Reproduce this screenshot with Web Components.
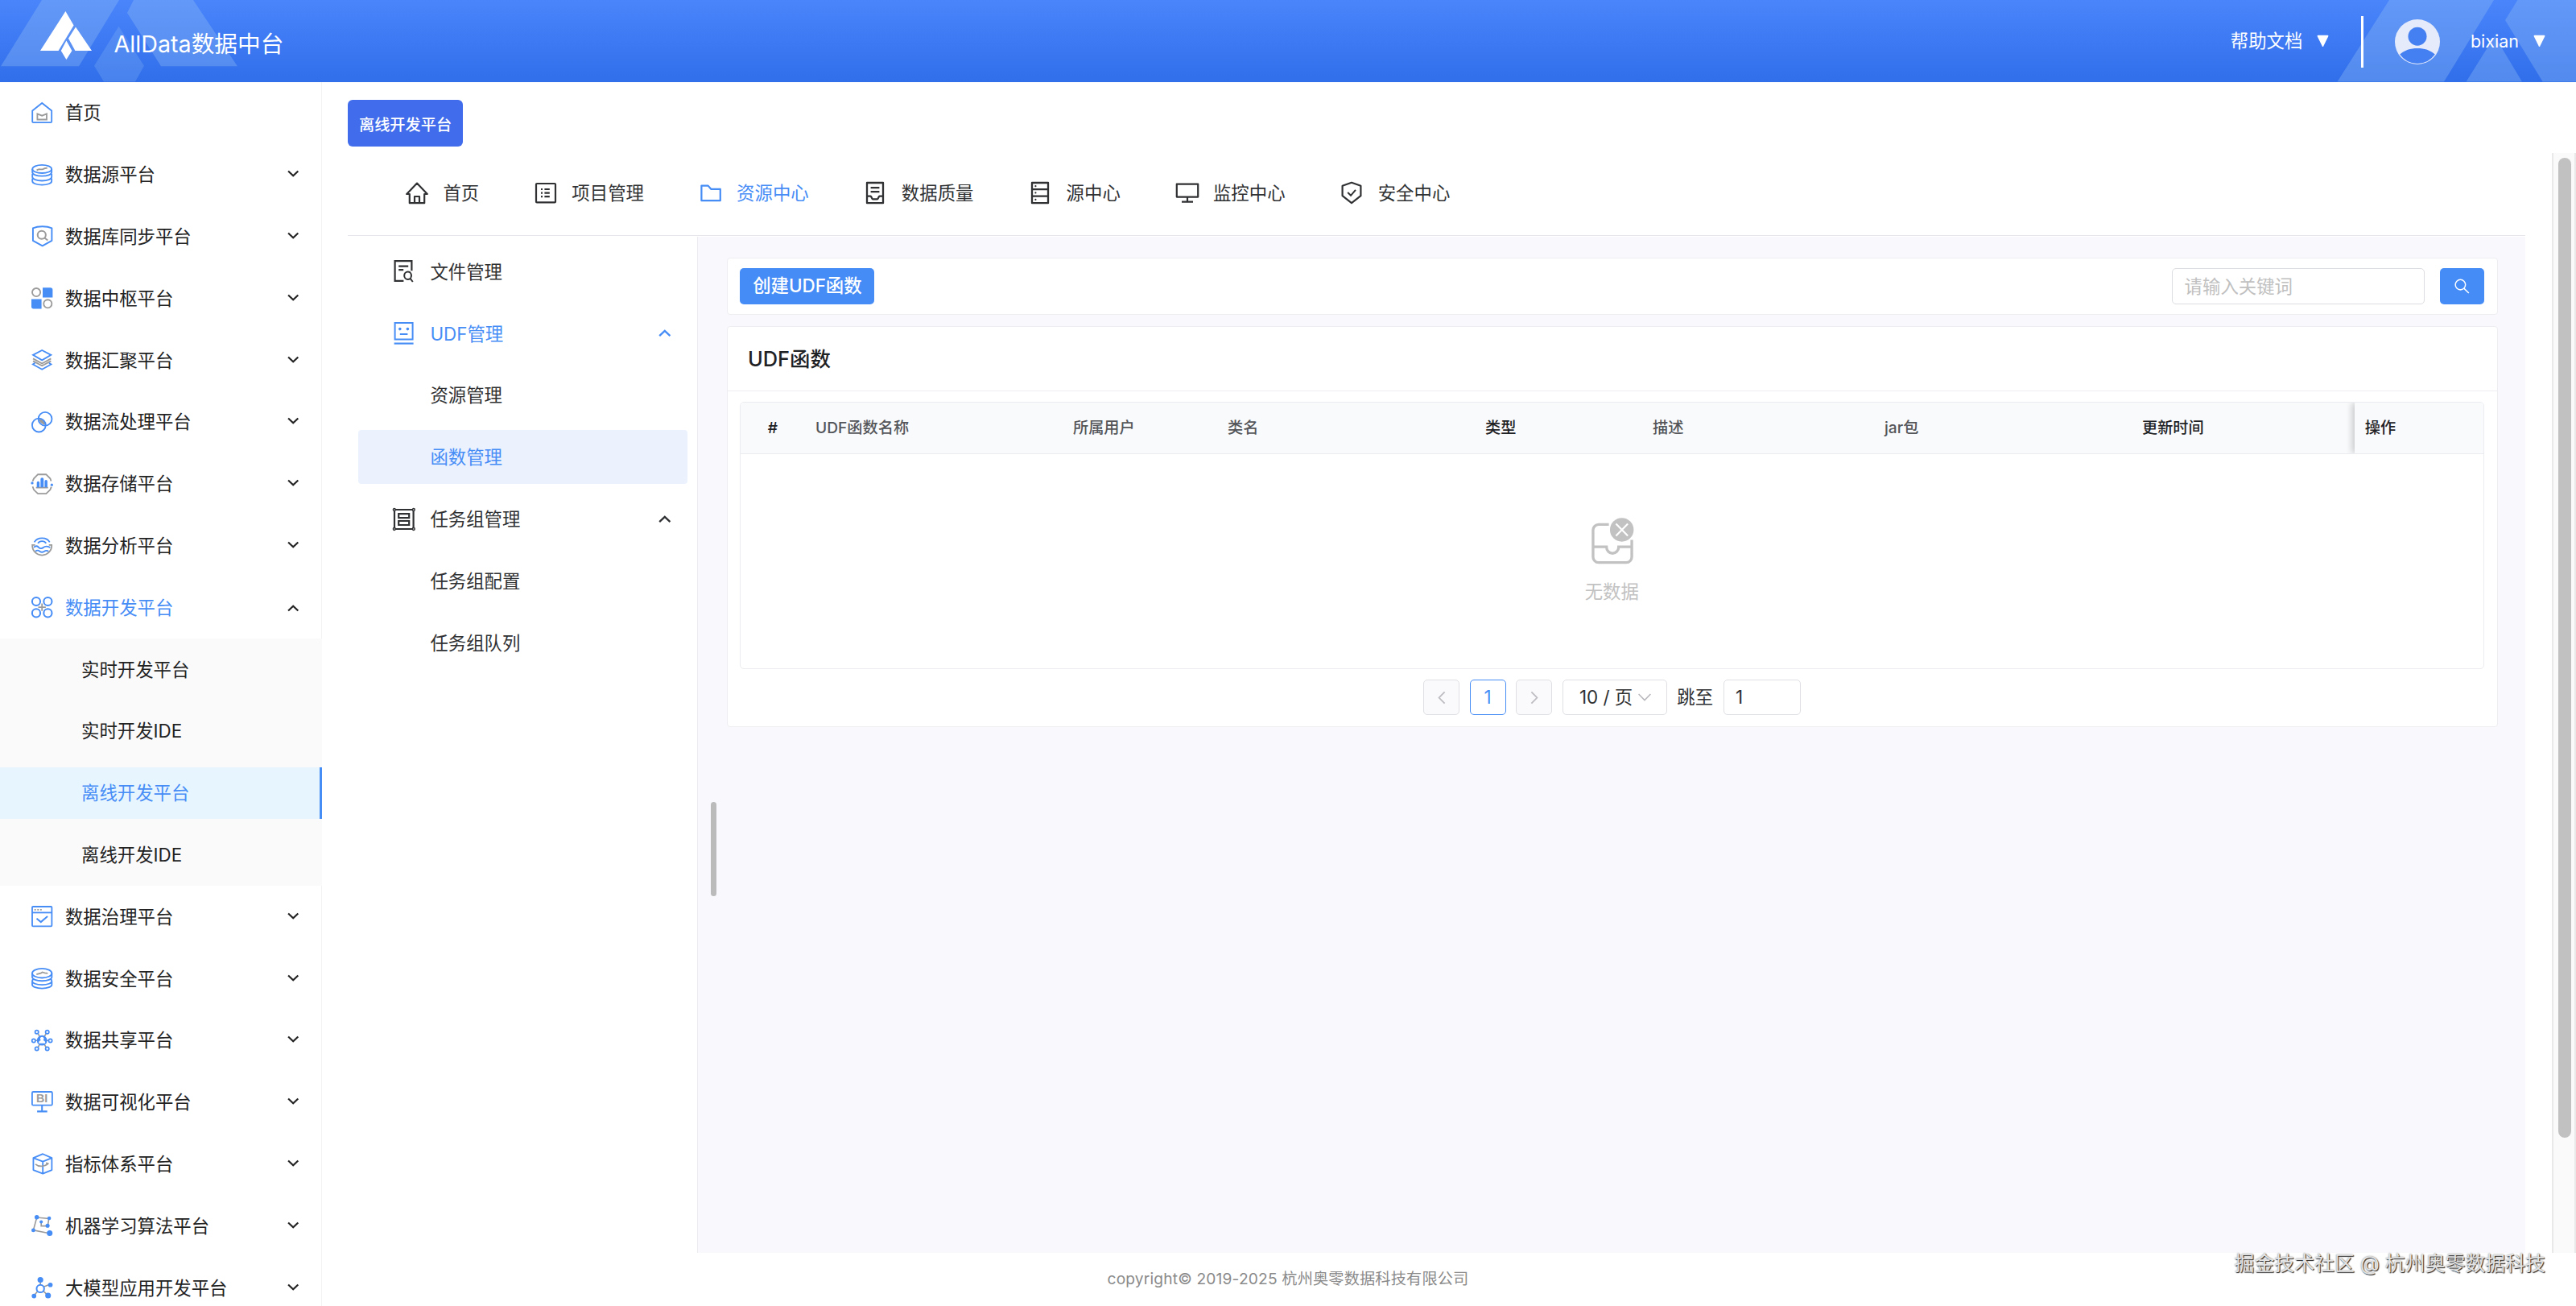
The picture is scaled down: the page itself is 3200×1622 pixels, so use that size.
<!DOCTYPE html>
<html lang="zh-CN">
<head>
<meta charset="utf-8">
<title>AllData数据中台</title>
<style>
    html, body { margin: 0; height: 100%; }
    body {
        overflow: hidden;
        background: #fff;
        color: #222;
        font-family: Inter, "Noto Sans CJK SC", sans-serif;
        font-size: 22.4px;
        line-height: 36px;
    }
</style>
</head>
<body>
<all-data-app></all-data-app>

<script>
const BLUE = '#478df6';
const GRAY = '#9b9b9b';

// name: [viewBox, markup]
const icons = {
    none: ['0 0 16 10', ''],

    // platform menu
    home: ['0 0 26 26', `<g fill="none" stroke-width="1.8"><path stroke="${BLUE}" d="M1.2 10.4 13 1l11.8 9.4v13.2a1.2 1.2 0 0 1-1.2 1.2H2.4a1.2 1.2 0 0 1-1.2-1.2z"/><path stroke="${GRAY}" d="M7.3 14.2 13 16.4l5.7-2.2v7H7.3z"/></g>`],
    db: ['0 0 26 26', `<g fill="none" stroke="${BLUE}" stroke-width="1.8"><ellipse cx="13" cy="5.8" rx="11.8" ry="5"/><path d="M1.2 5.8v4c0 2.7 5 4.6 11.8 4.6s11.8-1.9 11.8-4.6v-4M1.2 11.8v3.8c0 2.7 5 4.6 11.8 4.6s11.8-1.9 11.8-4.6v-3.8M1.2 17.4v3.2c0 2.7 5 4.6 11.8 4.6s11.8-1.9 11.8-4.6v-3.2"/><path stroke="${GRAY}" d="M6.5 7.4c3-2.6 4.3-.4 7-1.2 2-.6 3-2 6-1.4"/></g>`],
    sync: ['0 0 26 26', `<g fill="none" stroke-width="1.9"><path stroke="${BLUE}" stroke-linejoin="round" d="M1.9 3.3C8 .6 19 .6 25 3.3V18.6L13.5 25 1.9 18.6z"/><g stroke="${GRAY}" stroke-width="2"><circle cx="12.6" cy="11.6" r="5"/><path d="m16.2 15.2 3.8 3"/></g></g>`],
    hub: ['0 0 26 26', `<g fill="none" stroke="${GRAY}" stroke-width="1.8"><circle cx="6" cy="6" r="5"/><circle cx="20" cy="20" r="5"/></g><path fill="${BLUE}" d="M13.8.2h9.4a2.8 2.8 0 0 1 2.8 2.8v9.2H13.8zM0 14.2h12.4V26H2.6A2.6 2.6 0 0 1 0 23.4z"/>`],
    layers: ['0 0 26 26', `<g fill="none" stroke-width="1.8"><path stroke="${GRAY}" d="m2 11.2 11 6 11-6"/><path stroke="${GRAY}" d="m2 14.2 11 5.8 11-5.8"/><path stroke="${BLUE}" fill="#fff" d="M13 1 24 6.8 13 13.2 2 6.8z"/><path stroke="${BLUE}" d="m4.4 16.4-2.6 1.8L13 24.4l11.2-6.2-2.6-1.8"/></g>`],
    flow: ['0 0 26 26', `<path fill="${GRAY}" d="M9.2 8.2a8.4 8.4 0 0 1 8.4 8.4 8.4 8.4 0 0 1-8.4-8.4z"/><g fill="none" stroke="${BLUE}" stroke-width="1.8"><circle cx="16.8" cy="9.1" r="8.3"/><circle cx="9.2" cy="16.8" r="8.3"/></g>`],
    store: ['0 0 26 26', `<path fill="none" stroke="${GRAY}" stroke-width="1.8" d="M1.5 9.4 3 6.2 8 1.2h10l5 5 1.2 3.2M1.5 16l1.5 4 5 4.8h10l5-4.8 1.4-3.6M5.6 17.4h14.8"/><path fill="${BLUE}" d="M6.6 11.4a1.7 1.7 0 0 1 3.4 0V17H6.6zM11.2 7A1.9 1.9 0 0 1 15 7v10h-3.8zM16.2 9.6a1.7 1.7 0 0 1 3.4 0V17h-3.4z"/><circle cx="1" cy="11.8" r="1.6" fill="${BLUE}"/><circle cx="25" cy="14" r="1.6" fill="${BLUE}"/>`],
    analysis: ['0 0 26 26', `<g fill="none" stroke="${BLUE}" stroke-width="1.8"><path d="M3.6 9.2a10.4 8.6 0 0 1 18.8 0M8 10.6a5.6 4.8 0 0 1 10 0"/><path d="M3 15.6c2.6-2.6 4.6-1.6 6 0s4 1.6 5.6.2 4.8-1.8 8.4 0M5 20.4c2-1.8 4-1 5.6.2s3.6.8 4.8 0 3.6-1.6 5.6-.2"/><path stroke="${GRAY}" d="M1.2 12.4c-.6 7 5 12.8 11.8 12.8s12.4-5.8 11.8-12.8M.4 12.6h4.2M21.4 12.6h4.2"/></g>`],
    dev: ['0 0 26 26', `<path stroke="${GRAY}" stroke-width="1.8" d="M13 8.4v9.2M8.4 13h9.2"/><g fill="none" stroke="${BLUE}" stroke-width="2"><circle cx="5.9" cy="5.9" r="5"/><circle cx="20.1" cy="5.9" r="5"/><circle cx="5.9" cy="20.1" r="5"/><circle cx="20.1" cy="20.1" r="5"/></g>`],
    govern: ['0 0 26 26', `<g fill="none" stroke="${BLUE}" stroke-width="1.8"><rect x="1" y="1" width="24" height="24" rx="1"/><path d="M1 8.3h24"/><path stroke-width="2" d="m6.4 15.6 5.2 4.2 8.2-7"/><path stroke="${GRAY}" d="M3.6 4.8h9" stroke-dasharray="2 1.6"/></g>`],
    secure: ['0 0 26 26', `<g fill="none" stroke="${BLUE}" stroke-width="1.8"><ellipse cx="13" cy="6.6" rx="12" ry="5.7"/><path d="M1 6.6v4.8c0 2.5 5 4.6 12 4.6s12-2.1 12-4.6V6.6M3 13.4c-1.4.8-2 1.7-2 2.8 0 2.5 5 4.6 12 4.6s12-2.1 12-4.6c0-1.1-.6-2-2-2.8M1 17v3.6c0 2.5 5 4.6 12 4.6s12-2.1 12-4.6V17"/><path stroke="${GRAY}" d="m6.2 8 5.4-1.4 1.8-1.2 3 .8 3.6.6"/></g>`],
    share: ['0 0 26 26', `<path stroke="${GRAY}" stroke-width="1.6" d="m8 4.6 3 5M18 4.6l-3 5M8 21.4l3-5M18 21.4l-3-5M5 13h3M18 13h3"/><g fill="#fff" stroke="${BLUE}" stroke-width="1.7"><circle cx="6.6" cy="2.8" r="2.1"/><circle cx="19.4" cy="2.8" r="2.1"/><circle cx="2.8" cy="13.2" r="2.1"/><circle cx="23.2" cy="13.2" r="2.1"/><circle cx="6.6" cy="23.2" r="2.1"/><circle cx="19.4" cy="23.2" r="2.1"/></g><circle cx="13" cy="13" r="6.3" fill="${BLUE}"/><path fill="#fff" d="M13 8.6a2.3 2.3 0 0 1 1.3 4.2c2 .6 2.7 1.6 2.7 3.6H9c0-2 .7-3 2.7-3.6A2.3 2.3 0 0 1 13 8.6z"/>`],
    bi: ['0 0 26 26', `<g fill="none" stroke="${BLUE}" stroke-width="1.8"><rect x=".9" y="1" width="24.6" height="16.4" rx="1.4"/><path stroke-width="2" d="M13 17.4v6.8M7 25h12.4"/></g><text x="5.8" y="14.2" font-family="Liberation Sans, sans-serif" font-size="14" font-weight="700" fill="${GRAY}">BI</text>`],
    metric: ['0 0 26 26', `<g fill="none" stroke="${BLUE}" stroke-width="1.8" stroke-linejoin="round"><path d="M14 1.2 25 6v14.8l-11 4.4L2.4 20.8V6zM2.4 6 14 10.4 25 6M14 10.4v14.8"/><path stroke="${GRAY}" stroke-width="1.7" d="M5 13.6c3.6 3.4 11 3.4 15.6-.6l-2.8-.8"/></g>`],
    ml: ['0 0 26 26', `<path fill="none" stroke="${GRAY}" stroke-width="1.6" d="M12 8.6v4.8h8l1.4-9L6.6 3 2.4 18.6l19.6 3.8"/><g fill="${BLUE}"><circle cx="6.6" cy="2.8" r="2.7"/><circle cx="21.8" cy="4" r="2.2"/><circle cx="12" cy="8.4" r="2"/><circle cx="19.8" cy="13" r="2.5"/><circle cx="2.4" cy="18.6" r="2.4"/><circle cx="22.4" cy="22.2" r="3.5"/></g>`],
    llm: ['0 0 26 26', `<path fill="none" stroke="${GRAY}" stroke-width="1.6" d="M11 4v9.6M11 13.6l11.4-4.4M11 13.6 3 23M11 13.6l9.2 9"/><circle cx="11" cy="14.2" r="4.6" fill="#fff" stroke="${BLUE}" stroke-width="2"/><g fill="${BLUE}"><circle cx="11" cy="3.4" r="3.5"/><circle cx="23.2" cy="9.6" r="2.8"/><circle cx="3.2" cy="23.2" r="2.8"/><circle cx="20.4" cy="22.6" r="3.5"/></g>`],

    // toolbar and project menu, drawn in the text colour
    house: ['0 0 28 28', `<path fill="none" stroke="currentColor" stroke-width="2.2" stroke-linejoin="round" d="M14 1.6 1.2 15h3.6v11.2h18.4V15h3.6zM11 26.2V18h6v8.2"/>`],
    list: ['0 0 28 28', `<g fill="none" stroke="currentColor" stroke-width="2.2"><rect x="2" y="2" width="24" height="23.4" rx="1"/><path d="M12.4 9h6.4M12.4 13.6h6.4M12.4 18.2h6.4M8 9h2M8 13.6h2M8 18.2h2"/></g>`],
    folder: ['0 0 28 28', `<path fill="none" stroke="currentColor" stroke-width="2.2" stroke-linejoin="round" d="M2.4 4.6h8.2l3.6 4.2h11.6v14.4H2.4z"/>`],
    quality: ['0 0 28 28', `<path fill="none" stroke="currentColor" stroke-width="2.3" stroke-linejoin="round" d="M4 1h20v25.2H4zM8.6 7.2h10.8M8.6 12.2h10.8M4 17.6h4.4c1.2 0 1.4 3.8 3 3.8h5.2c1.6 0 1.8-3.8 3-3.8H24"/>`],
    server: ['0 0 28 28', `<path fill="none" stroke="currentColor" stroke-width="2.3" stroke-linejoin="round" d="M4 1h20v25.2H4zM4 9.2h20M4 17.6h20"/><g fill="currentColor"><circle cx="8.4" cy="5.2" r="1.1"/><circle cx="8.4" cy="13.4" r="1.1"/><circle cx="8.4" cy="21.9" r="1.1"/></g>`],
    monitor: ['0 0 28 28', `<path fill="none" stroke="currentColor" stroke-width="2.2" stroke-linejoin="round" d="M.8 2.6h26.4v16H.8zM14 18.6v6M7 24.6h14"/>`],
    shield: ['0 0 28 28', `<path fill="none" stroke="currentColor" stroke-width="2.2" stroke-linejoin="round" d="M14 .8 25.4 4.8v12.4L14 26.2 2.6 17.2V4.8z"/><path fill="none" stroke="currentColor" stroke-width="2" d="m9.2 13 3.8 3.8 6-7"/>`],
    file: ['0 0 28 28', `<path fill="none" stroke="currentColor" stroke-width="2.2" d="M13.4 25.8H2.6V1.2h20.8v12M7.2 7.6h12M7.2 12.2h6"/><ellipse cx="18.6" cy="19.2" rx="4.4" ry="4.8" fill="none" stroke="currentColor" stroke-width="2"/><path stroke="currentColor" stroke-width="2" d="m21.6 22.8 3.2 4.2"/>`],
    udf: ['0 0 28 28', `<path fill="none" stroke="currentColor" stroke-width="2" d="M2.6 1h22v20.6h-22zM8.8 15h9.6"/><path stroke="currentColor" stroke-width="2.2" d="M1.6 26.6h24"/><circle cx="8.8" cy="8.6" r="1.8" fill="currentColor"/><circle cx="18.4" cy="8.6" r="1.8" fill="currentColor"/>`],
    group: ['0 0 28 28', `<path fill="none" stroke="currentColor" stroke-width="2.2" d="M2 2h23.6v24H2zM7.2 7.2h13v5h-13zM7.2 16h13v5h-13z"/><g fill="#fff" stroke="currentColor" stroke-width="1.5"><circle cx="1.8" cy="2" r="1.4"/><circle cx="25.8" cy="2" r="1.4"/><circle cx="1.8" cy="26" r="1.4"/><circle cx="25.8" cy="26" r="1.4"/></g>`],

    search: ['0 0 20 20', `<g fill="none" stroke="currentColor" stroke-width="1.6"><circle cx="7.8" cy="8" r="6.6"/><path d="m12.4 12.8 6.4 6.2"/></g>`],
    down: ['0 0 16 10', `<path fill="none" stroke="currentColor" stroke-width="2.4" d="m1.2 1.6 6.8 6.4 6.8-6.4"/>`],
    up: ['0 0 16 10', `<path fill="none" stroke="currentColor" stroke-width="2.4" d="m1.2 8.4 6.8-6.4 6.8 6.4"/>`],
    left: ['0 0 10 18', `<path fill="none" stroke="currentColor" stroke-width="1.8" d="M8.6 1.4 1.6 9l7 7.6"/>`],
    right: ['0 0 10 18', `<path fill="none" stroke="currentColor" stroke-width="1.8" d="m1.4 1.4 7 7.6-7 7.6"/>`],
    thin: ['0 0 16 10', `<path fill="none" stroke="currentColor" stroke-width="1.6" d="m.6 1 7.4 7.6L15.4 1"/>`],
    caret: ['0 0 16 16', `<path fill="currentColor" d="M1.6.8h12.8a1 1 0 0 1 .8 1.5L9 15a1 1 0 0 1-2 0L.8 2.3A1 1 0 0 1 1.6.8z"/>`],
    logo: ['0 0 64 60', `<g fill="currentColor"><path d="M31.4 0 41.6 17.4 22.6 49H0z"/><path d="M44 19.6 64 49H43.4L35 33.8z"/><path d="m32.4 36.6 7 12.4-7 11-6.6-11z"/></g>`],
    user: ['0 0 56 56', `<circle cx="28" cy="28" r="28" fill="#e6ebfb"/><circle cx="28" cy="21.2" r="11.5" fill="#4480f2"/><path fill="#4480f2" d="M6.2 43.6C12 38.4 19 36 28 36s16 2.4 21.8 7.6A26.8 26.8 0 0 1 28 55 26.8 26.8 0 0 1 6.2 43.6z"/>`],
    empty: ['0 0 54 58', `<g fill="none" stroke="currentColor" stroke-width="3.4"><path d="M22 8.6H9a7 7 0 0 0-7 7v34a7 7 0 0 0 7 7h35a7 7 0 0 0 7-7V28M2 36.8h17c0 5 3.6 8.2 7.6 8.2s7.8-3.2 7.8-8.2H51"/></g><circle cx="38.4" cy="15.2" r="15" fill="currentColor"/><path stroke="#fff" stroke-width="2.2" d="m31 7.6 15 15.4M46 7.6 31 23"/>`]
};

// Registers an element whose shadow root is the given html.
// {attr} in the html is replaced by the attribute of that name
const element = (name, html) => {
    customElements.define(name, class extends HTMLElement {
        constructor() {
            super();
            this.attachShadow({mode: 'open'});
        }

        connectedCallback() {
            const template = document.createElement('template');
            template.innerHTML = html.replace(/\{(\w+)}/g, (_, attr) => this.getAttribute(attr) || '');
            this.shadowRoot.replaceChildren(template.content.cloneNode(true));
        }
    });
};

class UiIcon extends HTMLElement {
    constructor() {
        super();
        this.attachShadow({mode: 'open'});
    }

    connectedCallback() {
        const [box, markup] = icons[this.getAttribute('name')];
        this.shadowRoot.innerHTML = `
            <style>
                :host { display: block; flex: none; }
                svg { display: block; width: 100%; height: 100%; overflow: visible; }
            </style>
            <svg viewBox="${box}" preserveAspectRatio="none">${markup}</svg>
        `;
    }
}
customElements.define('ui-icon', UiIcon);

element('app-header', `
    <style>
        :host {
            display: flex;
            align-items: center;
            position: relative;
            flex: none;
            height: 101.6px;
            background: linear-gradient(#4a85fb, #306eea);
            color: #fff;
        }
        .deco { position: absolute; left: 0; top: 0; width: 100%; height: 100%; }
        .logo { position: relative; width: 64px; height: 60px; margin: -14px 0 0 50px; }
        h1 { position: relative; margin: 8px auto 0 27.5px; font-size: 28.7px; font-weight: 400; line-height: 40px; }
        .user { position: relative; display: flex; align-items: center; }
        .caret { width: 15px; height: 15px; margin-left: 17.5px; }
        .line { width: 3px; height: 64px; margin: 2px 39px 0 40px; background: #fff; }
        .avatar { width: 56px; height: 56px; margin: 2px 38px 0 0; }
        .name { font-size: 21.5px; }
        .end { margin-right: 38.5px; }
    </style>
    <svg class="deco" viewBox="0 0 3200 102" preserveAspectRatio="none">
        <g fill="#8fbcf5" fill-opacity=".36">
            <path d="M52 0h96L98 82.5H1z"/>
            <path d="M166 0h74l55 82.5h-95L158 16z"/>
            <path fill-opacity=".26" d="m147.5 33 31.5 49-11 20h-39l-12-20z"/>
            <path d="M2968 0h130l-62 102h-132.5z"/>
            <path d="M3127.5 0H3200v102h-41.4L3112 25z"/>
            <path d="m3099 45 34 57h-69.4z"/>
        </g>
    </svg>
    <ui-icon class="logo" name="logo"></ui-icon>
    <h1>AllData数据中台</h1>
    <div class="user">
        <span>帮助文档</span>
        <ui-icon class="caret" name="caret"></ui-icon>
        <div class="line"></div>
        <ui-icon class="avatar" name="user"></ui-icon>
        <span class="name">bixian</span>
        <ui-icon class="caret end" name="caret"></ui-icon>
    </div>
`);

element('menu-item', `
    <style>
        :host { display: flex; align-items: center; height: 76.8px; padding: 0 29px 0 39px; }
        :host([active]) .label { color: #478df6; }
        .icon { width: 26.4px; height: 26.4px; margin-right: 15.6px; }
        .label { flex: 1; padding-top: 1px; }
        .arrow { width: 14.4px; height: 9px; margin-top: -2px; }
        :host([active]) .arrow { margin-top: 3px; }
    </style>
    <ui-icon class="icon" name="{icon}"></ui-icon>
    <span class="label"><slot></slot></span>
    <ui-icon class="arrow" name="{arrow}"></ui-icon>
`);

element('menu-child', `
    <style>
        :host { display: block; padding: 6.4px 0; }
        div { display: flex; align-items: center; height: 64px; padding: 1px 0 0 101px; box-sizing: border-box; }
        :host([selected]) div { background: #e7f6fe; color: #478df6; border-right: 3px solid #478df6; }
    </style>
    <div><slot></slot></div>
`);

element('platform-menu', `
    <style>
        :host { display: block; flex: none; width: 400px; box-sizing: border-box; overflow: hidden; background: linear-gradient(#f2f2f2, #f2f2f2) 399px 0 / 1px 100% no-repeat; }
        .children { background: #fafafa; }
    </style>
    <menu-item icon="home" arrow="none">首页</menu-item>
    <menu-item icon="db" arrow="down">数据源平台</menu-item>
    <menu-item icon="sync" arrow="down">数据库同步平台</menu-item>
    <menu-item icon="hub" arrow="down">数据中枢平台</menu-item>
    <menu-item icon="layers" arrow="down">数据汇聚平台</menu-item>
    <menu-item icon="flow" arrow="down">数据流处理平台</menu-item>
    <menu-item icon="store" arrow="down">数据存储平台</menu-item>
    <menu-item icon="analysis" arrow="down">数据分析平台</menu-item>
    <menu-item icon="dev" arrow="up" active>数据开发平台</menu-item>
    <div class="children">
        <menu-child>实时开发平台</menu-child>
        <menu-child>实时开发IDE</menu-child>
        <menu-child selected>离线开发平台</menu-child>
        <menu-child>离线开发IDE</menu-child>
    </div>
    <menu-item icon="govern" arrow="down">数据治理平台</menu-item>
    <menu-item icon="secure" arrow="down">数据安全平台</menu-item>
    <menu-item icon="share" arrow="down">数据共享平台</menu-item>
    <menu-item icon="bi" arrow="down">数据可视化平台</menu-item>
    <menu-item icon="metric" arrow="down">指标体系平台</menu-item>
    <menu-item icon="ml" arrow="down">机器学习算法平台</menu-item>
    <menu-item icon="llm" arrow="down">大模型应用开发平台</menu-item>
`);

element('nav-tab', `
    <style>
        :host { display: flex; align-items: center; gap: 18.4px; }
        :host([active]) { color: #478df6; }
        ui-icon { width: 28px; height: 28px; }
    </style>
    <ui-icon name="{icon}"></ui-icon>
    <span><slot></slot></span>
`);

element('nav-bar', `
    <style>
        :host {
            display: flex;
            align-items: center;
            gap: 68.8px;
            height: 101px;
            margin-right: 33px;
            padding: 0 0 1px 72px;
            border-bottom: 1px solid #e6e7eb;
            color: #303133;
        }
    </style>
    <nav-tab icon="house">首页</nav-tab>
    <nav-tab icon="list">项目管理</nav-tab>
    <nav-tab icon="folder" active>资源中心</nav-tab>
    <nav-tab icon="quality">数据质量</nav-tab>
    <nav-tab icon="server">源中心</nav-tab>
    <nav-tab icon="monitor">监控中心</nav-tab>
    <nav-tab icon="shield">安全中心</nav-tab>
`);

element('tree-item', `
    <style>
        :host { display: flex; align-items: center; height: 66.8px; padding: 0 20px 0 43px; border-radius: 4px; }
        :host([active]), :host([selected]) { color: #478df6; }
        :host([selected]) { background: #ebf2fe; }
        .icon { width: 28px; height: 28px; margin-right: 18.4px; }
        .label { flex: 1; padding-top: 1px; }
        .arrow { width: 15.6px; height: 9.6px; }
    </style>
    <ui-icon class="icon" name="{icon}"></ui-icon>
    <span class="label"><slot></slot></span>
    <ui-icon class="arrow" name="{arrow}"></ui-icon>
`);

element('resource-tree', `
    <style>
        :host { display: flex; flex-direction: column; gap: 10px; flex: none; width: 409px; padding: 10px 12px 0 13px; border-right: 1px solid #ebebf0; background: #fff; color: #303133; }
    </style>
    <tree-item icon="file" arrow="none">文件管理</tree-item>
    <tree-item icon="udf" arrow="up" active>UDF管理</tree-item>
    <tree-item icon="none" arrow="none">资源管理</tree-item>
    <tree-item icon="none" arrow="none" selected>函数管理</tree-item>
    <tree-item icon="group" arrow="up">任务组管理</tree-item>
    <tree-item icon="none" arrow="none">任务组配置</tree-item>
    <tree-item icon="none" arrow="none">任务组队列</tree-item>
`);

element('ui-card', `
    <style>
        :host { display: block; border: 1px solid #eeeef2; border-radius: 4px; background: #fff; }
    </style>
    <slot></slot>
`);

element('search-bar', `
    <style>
        :host { display: flex; align-items: center; height: 69px; padding: 0 16.4px 0 15.4px; }
        .create, .search { display: flex; align-items: center; justify-content: center; height: 45px; border-radius: 5px; background: #458cf6; color: #fff; }
        .create { width: 167px; margin-right: auto; font-weight: 500; }
        .input { width: 314px; height: 45px; box-sizing: border-box; padding: 4px 15px; border: 1.6px solid #dcdde1; border-radius: 5px; color: #c0c0c0; }
        .search { width: 55px; margin-left: 19px; }
        ui-icon { width: 19px; height: 19px; }
    </style>
    <div class="create">创建UDF函数</div>
    <div class="input">请输入关键词</div>
    <div class="search"><ui-icon name="search"></ui-icon></div>
`);

element('data-table', `
    <style>
        :host { display: block; margin: 13px 16px 0 14.6px; border: 1px solid #ebecf0; border-radius: 5px; overflow: hidden; }
        .head {
            display: grid;
            grid-template-columns: 80.6px 320px 192px 320px 208px 288px 320px 1fr 160px;
            height: 63px;
            border-bottom: 1px solid #ebecf0;
            background: #f9fafc;
            font-size: 19.2px;
            font-weight: 500;
            line-height: 63px;
            overflow: hidden;
        }
        .head > * { padding-left: 12.8px; color: #54565a; }
        .head > .dark { color: #1f2225; }
        .head > .num { padding: 0; text-align: center; }
        .head > .fixed { box-shadow: -3px 0 8px rgba(0, 0, 0, .2); }
        .body { display: flex; flex-direction: column; align-items: center; height: 187px; padding-top: 79px; color: #c2c2c2; }
        .body ui-icon { width: 53px; height: 57px; margin: 0 0 17px 2px; }
    </style>
    <div class="head">
        <span class="dark num">#</span>
        <span>UDF函数名称</span>
        <span>所属用户</span>
        <span>类名</span>
        <span class="dark">类型</span>
        <span>描述</span>
        <span>jar包</span>
        <span class="dark">更新时间</span>
        <span class="dark fixed">操作</span>
    </div>
    <div class="body">
        <ui-icon name="empty"></ui-icon>
        <span>无数据</span>
    </div>
`);

element('page-bar', `
    <style>
        :host { display: flex; align-items: center; justify-content: center; gap: 12.8px; height: 71px; padding-right: 1px; color: #303133; }
        .box { display: flex; align-items: center; justify-content: center; width: 44.8px; height: 44.8px; box-sizing: border-box; border: 1.6px solid #dfe0e4; border-radius: 5px; }
        .off { background: #fafafc; color: #bdbdc2; }
        .off ui-icon { width: 10px; height: 17px; }
        .on { border-color: #478df6; color: #478df6; }
        .size { width: 129.6px; justify-content: flex-start; padding-left: 20px; }
        .size ui-icon { width: 16px; height: 10px; margin-left: 7px; color: #b8b8be; }
        .jump { width: 96px; justify-content: flex-start; padding-left: 14px; }
    </style>
    <div class="box off"><ui-icon name="left"></ui-icon></div>
    <div class="box on">1</div>
    <div class="box off"><ui-icon name="right"></ui-icon></div>
    <div class="box size"><span>10 / 页</span><ui-icon name="thin"></ui-icon></div>
    <span>跳至</span>
    <div class="box jump">1</div>
`);

element('udf-page', `
    <style>
        :host { display: block; flex: 1; position: relative; padding: 26px 34px 0 36px; background: #f8f8fd; }
        .list { margin-top: 13.6px; }
        h2 { margin: 0; height: 79px; padding-left: 25px; border-bottom: 1px solid #eeeef2; color: #1f2225; font-size: 25.4px; font-weight: 500; line-height: 80px; }
        .handle { position: absolute; left: 16px; top: 702px; width: 7px; height: 117px; border-radius: 4px; background: #bbb; }
    </style>
    <div class="handle"></div>
    <ui-card><search-bar></search-bar></ui-card>
    <ui-card class="list">
        <h2>UDF函数</h2>
        <data-table></data-table>
        <page-bar></page-bar>
    </ui-card>
`);

element('scroll-track', `
    <style>
        :host { display: block; flex: none; width: 30px; box-sizing: border-box; padding: 6px 0 0 6px; border: solid #e9e9e9; border-width: 0 2px; background: #fafafa; }
        div { width: 16px; height: 1217px; border-radius: 8px; background: #c1c1c1; }
    </style>
    <div></div>
`);

element('all-data-app', `
    <style>
        :host { display: flex; flex-direction: column; position: relative; height: 1622px; overflow: hidden; }
        .body { display: flex; flex: 1; min-height: 0; }
        main { flex: 1; display: flex; flex-direction: column; padding-left: 32px; }
        .tag { align-self: flex-start; height: 58px; margin: 22.4px 0 8px; padding: 2px 14px 0; box-sizing: border-box; border-radius: 6px; background: #416ceb; color: #fff; font-size: 19.2px; font-weight: 500; line-height: 58px; }
        .frame { display: flex; height: 1366px; }
        .view { flex: 1; }
        .split { display: flex; height: 1262px; margin: 1px 33px 0 0; }
        footer { padding: 14px 400px 0 0; margin-left: -32px; color: #8a8a8a; font-size: 19.2px; letter-spacing: .16px; text-align: center; }
        .mark { position: absolute; right: 38px; top: 1551px; color: #e4e4e4; font-size: 24.9px; text-shadow: 1px 1px 1px #222, 0 0 2px #888; white-space: nowrap; }
    </style>
    <app-header></app-header>
    <div class="body">
        <platform-menu></platform-menu>
        <main>
            <div class="tag">离线开发平台</div>
            <div class="frame">
                <div class="view">
                    <nav-bar></nav-bar>
                    <div class="split">
                        <resource-tree></resource-tree>
                        <udf-page></udf-page>
                    </div>
                </div>
                <scroll-track></scroll-track>
            </div>
            <footer>copyright© 2019-2025 杭州奥零数据科技有限公司</footer>
        </main>
    </div>
    <div class="mark">掘金技术社区 @ 杭州奥零数据科技</div>
`);
</script>
</body>
</html>
